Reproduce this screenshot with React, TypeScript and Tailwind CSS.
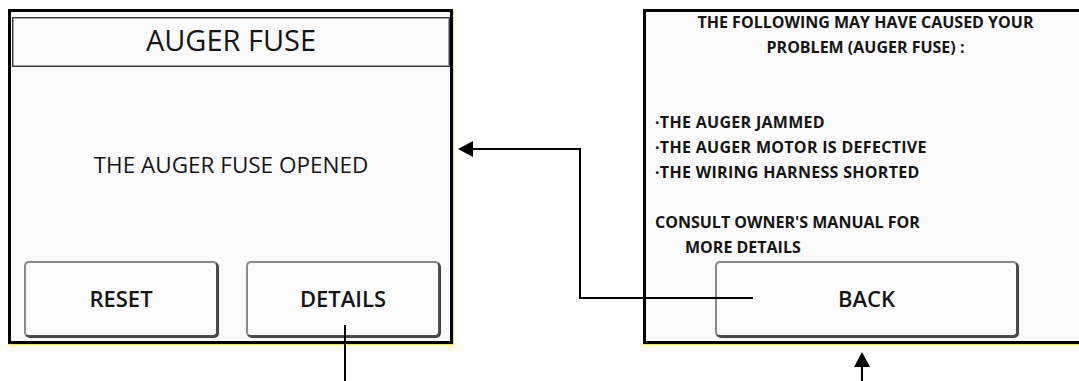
const font = { fontFamily: '"Open Sans", "Noto Sans", sans-serif' };

const ScreenButton = ({ label, className }: { label: string; className: string }) => (
  <div
    className={`flex items-center justify-center h-[76px] rounded-[5px] border-2 border-t-[#8a8a8a] border-l-[#8a8a8a] border-r-[#4e4e4e] border-b-[#4e4e4e] bg-[#fcfcfc] shadow-[1px_1px_0_0_#3f3f3f] pb-[2px] text-[22px] font-semibold text-[#151515] ${className}`}
  >
    {label}
  </div>
);

const AugerFuseScreen = () => (
  <div className="flex flex-col w-[445px] h-[335px] shrink-0 border-[3px] border-black bg-[#fbfbfb] shadow-[1px_1px_0_0_#f2f200] pt-[5px] pl-[1px] pb-[4px]">
    <div className="flex items-center justify-center h-[50px] border border-[#3a3a3a] shadow-[inset_0_0_0_1px_#a0a0a0] pb-[6px] text-[29px] leading-none text-[#151515]">
      AUGER FUSE
    </div>
    <div className="flex flex-1 items-center justify-center pt-[1px] text-[22.5px] text-[#151515]">
      THE AUGER FUSE OPENED
    </div>
    <div className="flex gap-[28px] pl-[12px]">
      <ScreenButton label="RESET" className="w-[194px]" />
      <ScreenButton label="DETAILS" className="w-[194px]" />
    </div>
  </div>
);

const DetailsScreen = () => (
  <div className="flex flex-col w-[445px] h-[335px] shrink-0 border-[3px] border-black bg-[#fbfbfb] shadow-[0_1px_0_0_#f2f200]">
    <div className="-mt-[2px] px-[9px] text-[16px] font-bold leading-[25px] text-[#151515]">
      <div className="text-center">THE FOLLOWING MAY HAVE CAUSED YOUR</div>
      <div className="text-center">PROBLEM (AUGER FUSE) :</div>
      <div className="h-[50px]" />
      <div className="tracking-[0.3px]">·THE AUGER JAMMED</div>
      <div className="tracking-[0.3px]">·THE AUGER MOTOR IS DEFECTIVE</div>
      <div className="tracking-[0.3px]">·THE WIRING HARNESS SHORTED</div>
      <div className="h-[25px]" />
      <div>CONSULT OWNER'S MANUAL FOR</div>
      <div className="pl-[30px]">MORE DETAILS</div>
    </div>
    <div className="flex justify-center pl-[2px] mt-[1px]">
      <ScreenButton label="BACK" className="w-[303px]" />
    </div>
  </div>
);

export default function App() {
  return (
    <div className="relative w-[1079px] h-[381px] bg-white overflow-hidden" style={font}>
      <div className="flex gap-[190px] pt-[9px] pl-[8px]">
        <AugerFuseScreen />
        <DetailsScreen />
      </div>
      <svg className="absolute inset-0 pointer-events-none" width="1079" height="381" viewBox="0 0 1079 381">
        <line x1="345" y1="325" x2="345" y2="381" stroke="#000" strokeWidth="2" />
        <polyline points="753,298 580,298 580,149 472,149" fill="none" stroke="#000" strokeWidth="2" />
        <polygon points="458,149 473,141 473,157" fill="#000" />
        <line x1="862" y1="366" x2="862" y2="381" stroke="#000" strokeWidth="2" />
        <polygon points="862,352 854,367 870,367" fill="#000" />
      </svg>
    </div>
  );
}
